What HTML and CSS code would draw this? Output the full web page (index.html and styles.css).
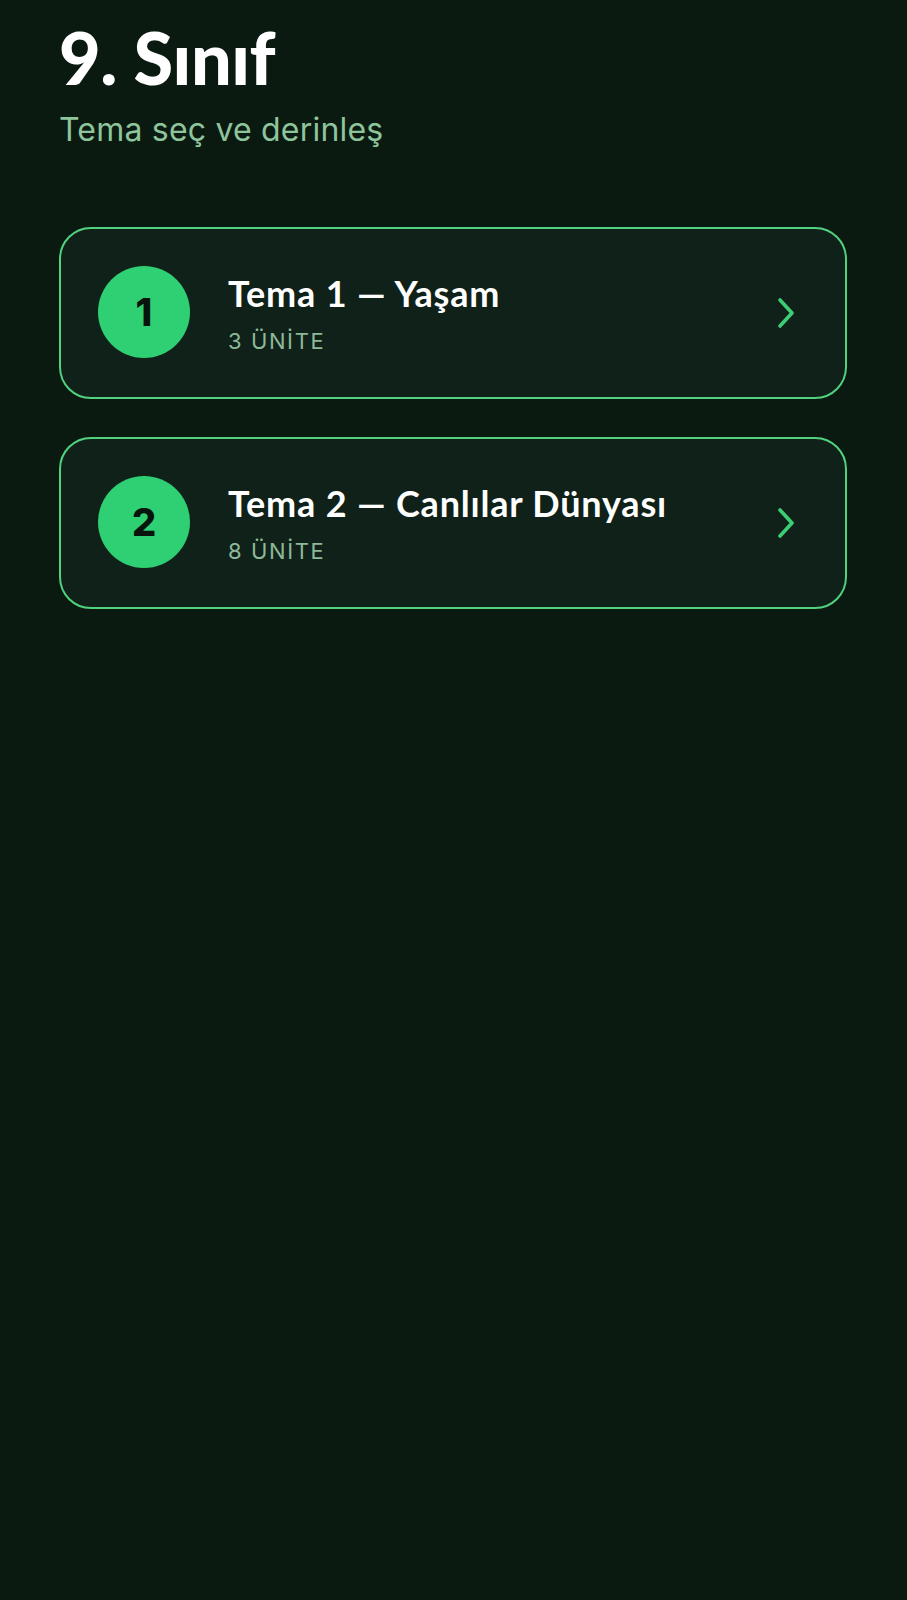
FILE: index.html
```html
<!DOCTYPE html>
<html lang="tr">
<head>
<meta charset="utf-8">
<title>9. Sınıf</title>
<link rel="stylesheet" href="styles.css">
</head>
<body>
<main class="page">
  <header class="header">
    <h1 class="title">9. Sınıf</h1>
    <p class="subtitle">Tema seç ve derinleş</p>
  </header>
  <ul class="themes">
    <li class="card">
      <span class="badge">1</span>
      <div class="info">
        <span class="name">Tema 1 — Yaşam</span>
        <span class="count">3 ÜNİTE</span>
      </div>
      <svg class="chev" viewBox="0 0 20 34" width="20" height="34" aria-hidden="true">
        <path d="M4 4 L16 17 L4 30" fill="none" stroke="#3dcd74" stroke-width="3.6" stroke-linecap="round" stroke-linejoin="round"/>
      </svg>
    </li>
    <li class="card">
      <span class="badge">2</span>
      <div class="info">
        <span class="name">Tema 2 — Canlılar Dünyası</span>
        <span class="count">8 ÜNİTE</span>
      </div>
      <svg class="chev" viewBox="0 0 20 34" width="20" height="34" aria-hidden="true">
        <path d="M4 4 L16 17 L4 30" fill="none" stroke="#3dcd74" stroke-width="3.6" stroke-linecap="round" stroke-linejoin="round"/>
      </svg>
    </li>
  </ul>
</main>
</body>
</html>
```
FILE: styles.css
```css
html, body {
  margin: 0;
  padding: 0;
  background: #0b1a11;
}
body {
  min-height: 1600px;
  font-family: Inter, "Noto Sans", sans-serif;
  color: #ffffff;
}
.page {
  padding: 14px 60px 0 59px;
}
.header {
  display: flex;
  flex-direction: column;
}
.title {
  margin: 0;
  font-family: Lato, "Open Sans", sans-serif;
  font-weight: 900;
  font-size: 72px;
  line-height: 86px;
  letter-spacing: -0.5px;
  color: #ffffff;
}
.subtitle {
  margin: 10px 0 0;
  font-size: 32px;
  line-height: 40px;
  letter-spacing: 0.2px;
  color: #8ec59c;
}
.themes {
  list-style: none;
  margin: 77px 0 0;
  padding: 0;
  display: flex;
  flex-direction: column;
  gap: 38px;
}
.card {
  box-sizing: border-box;
  height: 172px;
  display: flex;
  align-items: center;
  padding: 0 49px 0 37px;
  border: 2px solid #52d17e;
  border-radius: 32px;
  background: #0f2119;
}
.badge {
  flex: none;
  width: 92px;
  height: 92px;
  margin-top: -2px;
  border-radius: 50%;
  background: #2fcf73;
  color: #07140c;
  display: flex;
  align-items: center;
  justify-content: center;
  font-family: Inter, "Liberation Sans", sans-serif;
  font-weight: 800;
  font-size: 38px;
}
.info {
  flex: 1;
  display: flex;
  flex-direction: column;
  margin-left: 38px;
  gap: 12px;
}
.name {
  font-family: Lato, "Open Sans", sans-serif;
  font-weight: 700;
  font-size: 36px;
  line-height: 44px;
  letter-spacing: 0.8px;
  color: #ffffff;
}
.count {
  font-size: 22px;
  line-height: 28px;
  letter-spacing: 1.6px;
  color: #8db899;
}
.chev {
  flex: none;
  display: block;
}
```
